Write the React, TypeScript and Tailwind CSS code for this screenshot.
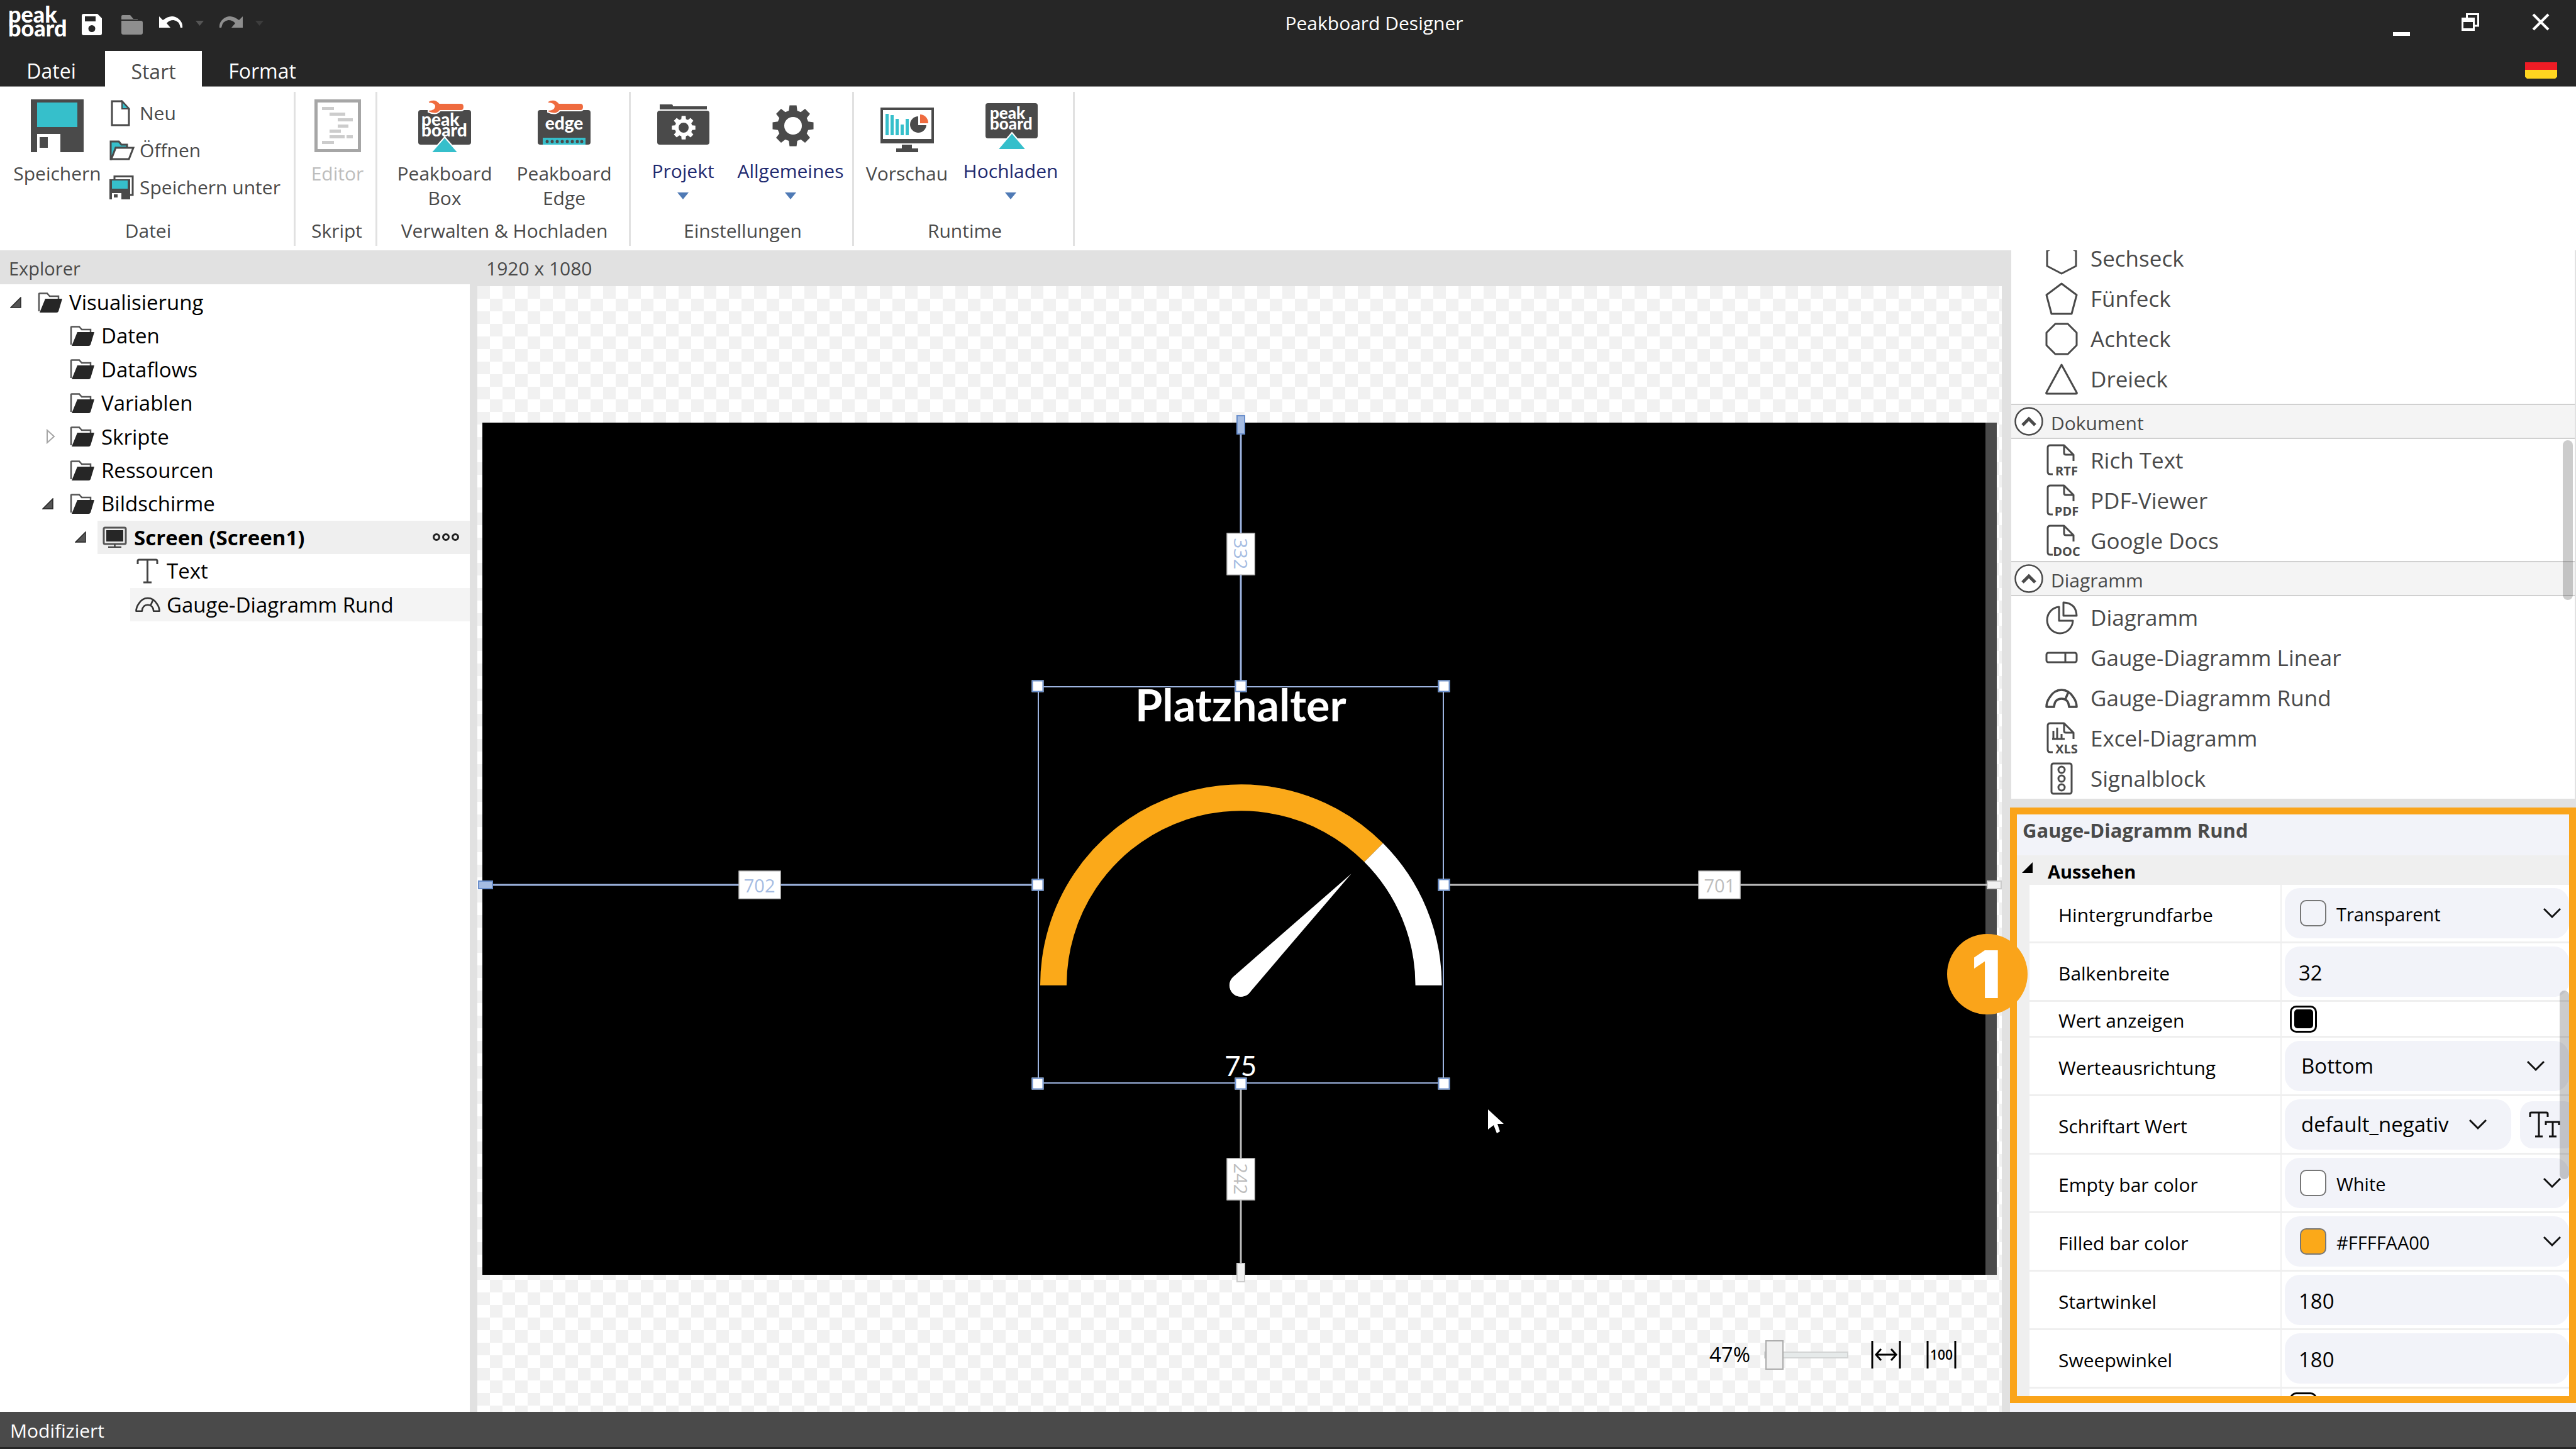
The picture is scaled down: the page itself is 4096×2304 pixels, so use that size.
import type { ReactNode } from "react";

const DARK = "#4a4a4a";
const CYAN = "#36bfcb";
const ORANGE = "#ef6b3f";

function gearPath(cx: number, cy: number, outer: number, root: number, hole: number) {
  const points: string[] = [];
  for (let i = 0; i < 8; i++) {
    const mid = (i * Math.PI) / 4;
    const corners: [number, number][] = [
      [root, -0.27],
      [outer, -0.17],
      [outer, 0.17],
      [root, 0.27],
    ];
    for (const [r, d] of corners) {
      points.push(`${(cx + r * Math.sin(mid + d)).toFixed(2)} ${(cy - r * Math.cos(mid + d)).toFixed(2)}`);
    }
  }
  return `M${points.join("L")}Z M${cx - hole} ${cy}a${hole} ${hole} 0 1 0 ${hole * 2} 0a${hole} ${hole} 0 1 0 ${-hole * 2} 0Z`;
}

/* ---------- ribbon icons ---------- */

function Big({ children }: { children: ReactNode }) {
  return (
    <svg viewBox="0 0 84 84" className="size-[84px] shrink-0 overflow-visible">
      {children}
    </svg>
  );
}

function LogoText({ x, y, size, gap }: { x: number; y: number; size: number; gap: number }) {
  return (
    <text fill="#fff" fontFamily="Lato, sans-serif" fontWeight={900} fontSize={size}>
      <tspan x={x} y={y}>peak</tspan>
      <tspan x={x} y={y + gap}>board</tspan>
    </text>
  );
}

const Wrench = () => (
  <path
    d="M16 3 Q27 -3 34 6 H68 Q73 6 73 12 Q73 18 68 18 H35 Q29 26 16 20 V17 Q26 17 26 11.500 Q26 6 16 6 Z"
    fill={ORANGE}
    stroke="#fff"
    strokeWidth="2"
  />
);

const SaveIcon = () => (
  <Big>
    <rect width="84" height="84" fill={DARK} />
    <rect x="10" y="5" width="64" height="39" fill={CYAN} />
    <rect x="10" y="55" width="37" height="29" fill="#fff" />
    <rect x="14" y="60" width="13" height="17" fill={DARK} />
  </Big>
);

const EditorIcon = () => (
  <Big>
    <g transform="translate(5 0)">
      <rect x="2.500" y="2.500" width="69" height="79" fill="#fff" stroke="#a6a6a6" strokeWidth="5" />
      <g fill="#cccccc">
        <rect x="12" y="12" width="19" height="5" />
        <rect x="24" y="21" width="25" height="5" />
        <rect x="37" y="30" width="24" height="5" />
        <rect x="37" y="40" width="17" height="5" />
        <rect x="24" y="48" width="18" height="5" />
        <rect x="24" y="57" width="24" height="5" />
        <rect x="51" y="57" width="10" height="5" />
        <rect x="12" y="66" width="19" height="5" />
      </g>
    </g>
  </Big>
);

const BoxIcon = () => (
  <Big>
    <rect y="17" width="84" height="55" rx="4" fill={DARK} />
    <LogoText x={5} y={42} size={28} gap={17} />
    <path d="M42 60 L64 85 H20 Z" fill={CYAN} stroke="#fff" strokeWidth="2" />
    <Wrench />
  </Big>
);

const EdgeIcon = () => (
  <Big>
    <rect y="17" width="84" height="55" rx="4" fill={DARK} />
    <text x="42" y="48" textAnchor="middle" fill="#fff" fontFamily="Lato, sans-serif" fontWeight={900} fontSize="28">
      edge
    </text>
    <rect x="8" y="61" width="68" height="11" fill={CYAN} />
    {[15, 23, 31, 39, 47, 55, 63, 70].map((x) => (
      <circle key={x} cx={x} cy="67" r="2.500" fill={DARK} />
    ))}
    <Wrench />
  </Big>
);

const ProjectIcon = () => (
  <Big>
    <path d="M5 8 H24 Q26 8 26 11 H80 V16 H5 Z" fill={DARK} />
    <rect x="1" y="18" width="83" height="54" rx="4" fill={DARK} />
    <path d={gearPath(43, 45, 19, 14, 8)} fill="#fff" fillRule="evenodd" />
  </Big>
);

const GearIcon = () => (
  <Big>
    <path d={gearPath(46, 42, 33, 25, 14)} fill={DARK} fillRule="evenodd" />
  </Big>
);

const PreviewIcon = () => (
  <Big>
    <rect y="13" width="85" height="57" fill={DARK} />
    <rect x="4" y="17" width="77" height="46" fill="#fff" />
    <rect x="34" y="72" width="16" height="7" fill={DARK} />
    <rect x="25" y="78" width="35" height="6" fill={DARK} />
    <g fill={CYAN}>
      <rect x="8" y="23" width="5" height="34" />
      <rect x="16" y="25" width="5" height="32" />
      <rect x="24" y="31" width="5" height="26" />
      <rect x="32" y="40" width="5" height="17" />
      <rect x="40" y="31" width="5" height="26" />
    </g>
    <path d="M60 27 A13 13 0 1 0 73 41 H60 Z" fill={DARK} />
    <path d="M63 24 A13 14 0 0 1 76 38 H63 Z" fill={ORANGE} />
  </Big>
);

const UploadIcon = () => (
  <Big>
    <rect x="2" y="6" width="83" height="56" rx="4" fill={DARK} />
    <LogoText x={9} y={31} size={26} gap={17} />
    <path d="M44 53 L67 80 H21 Z" fill={CYAN} stroke="#fff" strokeWidth="2" />
  </Big>
);

const NewIcon = () => (
  <svg viewBox="0 0 40 42" className="h-[42px] w-10 shrink-0">
    <path d="M4 2 H20 L31 14 V40 H4 Z" fill="#fff" stroke={DARK} strokeWidth="3" />
    <path d="M20 2 L31 14 H20 Z" fill={CYAN} stroke={DARK} strokeWidth="2" />
  </svg>
);

const OpenIcon = () => (
  <svg viewBox="0 0 40 32" className="h-8 w-10 shrink-0">
    <path d="M2 30 V2 H15 L19 7 H28 V12 H10 L3 30 Z" fill={CYAN} stroke={DARK} strokeWidth="3" />
    <path d="M10 12 H38 L31 30 H3 Z" fill="#fff" stroke={DARK} strokeWidth="3" />
  </svg>
);

const SaveAsIcon = () => (
  <svg viewBox="0 0 40 38" className="h-[38px] w-10 shrink-0">
    <path d="M8 6 V1.500 H37 V31 H33" fill="#fff" stroke={DARK} strokeWidth="3" />
    <rect x="0" y="6" width="33" height="32" fill={DARK} />
    <rect x="4" y="8" width="25" height="13" fill={CYAN} />
    <rect x="4" y="28" width="15" height="10" fill="#fff" />
    <rect x="7" y="30" width="6" height="5" fill={DARK} />
  </svg>
);

const DownTriangle = ({ className }: { className: string }) => (
  <svg viewBox="0 0 18 11" className={className}>
    <path d="M0 0 H18 L9 11 Z" fill="currentColor" />
  </svg>
);

/* ---------- ribbon ---------- */

function BigButton({ icon, lines, width, disabled }: { icon: ReactNode; lines: string[]; width: string; disabled?: boolean }) {
  return (
    <button type="button" disabled={disabled} className={`flex flex-col items-center pt-3 ${width} ${disabled ? "text-[#bdbdbd]" : ""}`}>
      {icon}
      <span className="mt-3.5 flex flex-col text-[30px] leading-[39px]">
        {lines.map((l) => (
          <span key={l}>{l}</span>
        ))}
      </span>
    </button>
  );
}

function MenuButton({ icon, label, width }: { icon: ReactNode; label: string; width: string }) {
  return (
    <button type="button" className={`flex flex-col items-center pt-3 text-[#1f2a70] ${width}`}>
      {icon}
      <span className="mt-2.5 text-[30px] leading-[39px]">{label}</span>
      <DownTriangle className="mt-[15px] h-[11px] w-[18px] text-[#4f7ab5]" />
    </button>
  );
}

function Group({ label, width, children }: { label: string; width: string; children: ReactNode }) {
  return (
    <section className={`flex flex-col border-r-[3px] border-[#e1e1e1] ${width}`}>
      <div className="flex flex-1 items-start">{children}</div>
      <h2 className="pl-1 text-center text-[30px] leading-[48px]">{label}</h2>
    </section>
  );
}

function Ribbon() {
  const small = [
    { icon: <NewIcon />, label: "Neu" },
    { icon: <OpenIcon />, label: "Öffnen" },
    { icon: <SaveAsIcon />, label: "Speichern unter" },
  ];
  return (
    <div className="flex h-[260px] shrink-0 bg-white pt-2 pb-[7px] text-[#4a4a4a]">
      <Group label="Datei" width="w-[470px]">
        <BigButton icon={<SaveIcon />} lines={["Speichern"]} width="ml-3 w-[158px]" />
        <ul className="mt-1 ml-1">
          {small.map((s) => (
            <li key={s.label}>
              <button type="button" className="flex h-[59px] items-center gap-2 text-[30px] whitespace-nowrap">
                {s.icon}
                {s.label}
              </button>
            </li>
          ))}
        </ul>
      </Group>
      <Group label="Skript" width="w-[130px]">
        <BigButton icon={<EditorIcon />} lines={["Editor"]} width="ml-1.5 w-[121px]" disabled />
      </Group>
      <Group label="Verwalten & Hochladen" width="w-[403px]">
        <BigButton icon={<BoxIcon />} lines={["Peakboard", "Box"]} width="ml-3 w-[190px]" />
        <BigButton icon={<EdgeIcon />} lines={["Peakboard", "Edge"]} width="w-[190px]" />
      </Group>
      <Group label="Einstellungen" width="w-[355px]">
        <MenuButton icon={<ProjectIcon />} label="Projekt" width="ml-0.5 w-[162px]" />
        <MenuButton icon={<GearIcon />} label="Allgemeines" width="w-[180px]" />
      </Group>
      <Group label="Runtime" width="w-[351px]">
        <BigButton icon={<PreviewIcon />} lines={["Vorschau"]} width="ml-0.5 w-[164px]" />
        <MenuButton icon={<UploadIcon />} label="Hochladen" width="w-[166px]" />
      </Group>
    </div>
  );
}

/* ---------- title bar ---------- */

function TitleBar() {
  return (
    <header className="shrink-0 bg-[#262626] text-white">
      <div className="flex h-[81px] items-start">
        <div className="flex w-[607px] items-start">
          <svg viewBox="0 0 104 70" className="ml-3 h-[70px] w-[104px] shrink-0" role="img" aria-label="peakboard">
            <LogoText x={1} y={36} size={36} gap={22} />
          </svg>
          <div className="flex h-[78px] items-center">
            <button type="button" aria-label="Speichern" className="ml-3.5">
              <svg viewBox="0 0 32 34" className="h-[34px] w-8">
                <path fillRule="evenodd" fill="#fff" d="M3 0 H25 L32 7 V31 Q32 34 29 34 H3 Q0 34 0 31 V3 Q0 0 3 0 Z M5 4 V12 H22 V4 Z M16 18 A5 5 0 1 0 16 29 A5 5 0 1 0 16 18 Z" />
              </svg>
            </button>
            <button type="button" aria-label="Öffnen" className="ml-[31px]">
              <svg viewBox="0 0 34 32" className="h-8 w-[34px]">
                <path fill="#8e8e8e" d="M0 8 V3 Q0 1 2 1 H14 L19 7 H26 V8 Z M0 10 H31 Q34 10 34 13 V29 Q34 32 31 32 H3 Q0 32 0 29 Z" />
              </svg>
            </button>
            <button type="button" aria-label="Rückgängig" className="-mt-2 ml-[26px]">
              <svg viewBox="0 0 38 20" className="h-5 w-[38px]">
                <path fill="#fff" d="M0 1 L6 7 Q20 -4 31 5 Q38 11 37 19 H34 Q32 8 23 7 Q16 7 12 12 L18 19 H0 Z" />
              </svg>
            </button>
            <DownTriangle className="-mt-1 ml-5 h-2.5 w-[13px] text-[#555555]" />
            <button type="button" aria-label="Wiederholen" className="-mt-2 ml-6">
              <svg viewBox="0 0 38 20" className="h-5 w-[38px]">
                <path fill="#8e8e8e" d="M38 1 L32 7 Q18 -4 7 5 Q0 11 1 19 H4 Q6 8 15 7 Q22 7 26 12 L20 19 H38 Z" />
              </svg>
            </button>
            <DownTriangle className="-mt-1 ml-5 h-2.5 w-[13px] text-[#3c3c3c]" />
          </div>
        </div>
        <h1 className="flex-1 text-center text-[30px] leading-[74px]">Peakboard Designer</h1>
        <button type="button" aria-label="Minimieren" className="flex h-[74px] w-[110px] justify-center pt-[51px]">
          <span className="h-1.5 w-[27px] bg-white" />
        </button>
        <button type="button" aria-label="Verkleinern" className="flex h-[74px] w-[110px] items-center justify-center">
          <svg viewBox="0 0 28 28" className="-mt-1 size-7">
            <path d="M8.500 7 V1.500 H26.500 V20 H20" fill="none" stroke="#fff" strokeWidth="3" />
            <path fillRule="evenodd" fill="#fff" d="M0 7 H21 V28 H0 Z M3 14 V24 H18 V14 Z" />
          </svg>
        </button>
        <button type="button" aria-label="Schließen" className="flex h-[74px] w-[113px] items-center justify-center">
          <svg viewBox="0 0 28 28" className="-mt-1 size-7">
            <path d="M2 2 L26 26 M26 2 L2 26" stroke="#fff" strokeWidth="4" />
          </svg>
        </button>
      </div>
      <nav className="flex h-[57px] text-[32px]">
        <button type="button" className="w-[167px] border-b border-[#888888] pt-2 pr-1">Datei</button>
        <button type="button" className="w-[154px] bg-white pt-2 text-[#4a4a4a]">Start</button>
        <button type="button" className="w-[196px] border-b border-[#888888] pt-2 pr-1">Format</button>
        <div className="flex flex-1 items-start justify-end border-b border-[#888888] pt-[18px] pr-[30px]">
          <button type="button" aria-label="Sprache: Deutsch">
            <svg viewBox="0 0 51 26" className="h-[26px] w-[51px]">
              <rect width="51" height="12" fill="#ee1c25" />
              <path d="M0 12 H51 V23 L48 26 H3 L0 23 Z" fill="#ffd520" />
            </svg>
          </button>
        </div>
      </nav>
    </header>
  );
}

/* ---------- explorer ---------- */

const FolderIcon = () => (
  <svg viewBox="0 0 40 32" className="h-8 w-10 shrink-0">
    <path d="M2 30 V2 Q2 1.500 3 1.500 H15 L19 6 H33 V10" fill="none" stroke="#555555" strokeWidth="2.500" />
    <path d="M12 10 H39 L33 30 Q32 32 30 32 H3 Z" fill="#262626" />
  </svg>
);

const ScreenIcon = () => (
  <svg viewBox="0 0 40 34" className="h-[34px] w-10 shrink-0">
    <rect x="2" y="2" width="35" height="26" rx="2" fill="none" stroke="#555555" strokeWidth="3" />
    <rect x="6" y="6" width="27" height="18" fill="#262626" />
    <path d="M19.500 28 V33 M9 33 H30" stroke="#444444" strokeWidth="2.500" />
  </svg>
);

const TextIcon = () => (
  <svg viewBox="0 0 40 40" className="size-10 shrink-0">
    <path d="M4 9 V4 Q4 2 6 2 H33 Q35 2 35 4 V9 M19.500 2 V38 M13 38 H26" fill="none" stroke="#444444" strokeWidth="3" />
  </svg>
);

function RoundGauge({ className, color }: { className: string; color: string }) {
  return (
    <svg viewBox="0 0 52 52" className={className}>
      <path
        d="M2 40 Q2 32 7 25 Q14 13 26 13 Q38 13 45 25 Q50 32 50 40 H38 Q37 27 26 27 Q15 27 14 40 Z M32 28 L37 16"
        fill="none"
        stroke={color}
        strokeWidth="3.500"
        strokeLinejoin="round"
      />
    </svg>
  );
}

type Node = { label: string; level: 0 | 1 | 2 | 3; arrow?: "open" | "closed"; icon: ReactNode; bold?: boolean; mark?: string };

const tree: Node[] = [
  { label: "Visualisierung", level: 0, arrow: "open", icon: <FolderIcon /> },
  { label: "Daten", level: 1, icon: <FolderIcon /> },
  { label: "Dataflows", level: 1, icon: <FolderIcon /> },
  { label: "Variablen", level: 1, icon: <FolderIcon /> },
  { label: "Skripte", level: 1, arrow: "closed", icon: <FolderIcon /> },
  { label: "Ressourcen", level: 1, icon: <FolderIcon /> },
  { label: "Bildschirme", level: 1, arrow: "open", icon: <FolderIcon /> },
  { label: "Screen (Screen1)", level: 2, arrow: "open", icon: <ScreenIcon />, bold: true, mark: "bg-[#efefef]" },
  { label: "Text", level: 3, icon: <TextIcon /> },
  { label: "Gauge-Diagramm Rund", level: 3, icon: <RoundGauge className="size-10 shrink-0" color="#333333" />, mark: "bg-[#f4f4f4]" },
];

const indent = ["pl-4", "pl-[67px]", "pl-[119px]", "pl-[171px]"];

function Explorer() {
  return (
    <aside className="flex w-[747px] shrink-0 flex-col">
      <h2 className="h-[54px] pl-3.5 text-[29px] leading-[58px] text-[#4a4a4a]">Explorer</h2>
      <div className="flex-1 bg-white pt-0.5">
        <ul className="grid h-[534px] grid-rows-10 text-[33px] text-black">
          {tree.map((n) => (
            <li key={n.label} className={`flex min-h-0 ${indent[n.level]}`}>
              <span className="flex w-9 shrink-0 items-center">
                {n.arrow === "open" && (
                  <svg viewBox="0 0 18 18" className="size-[18px]">
                    <path d="M17 1 V17 H1 Z" fill="#555555" stroke="#262626" strokeWidth="1.500" />
                  </svg>
                )}
                {n.arrow === "closed" && (
                  <svg viewBox="0 0 22 24" className="h-6 w-[22px]">
                    <path d="M8 2 V22 L19 12 Z" fill="#fff" stroke="#a6a6a6" strokeWidth="2" />
                  </svg>
                )}
              </span>
              <button type="button" className={`flex flex-1 items-center gap-2.5 pl-2 text-left ${n.mark ?? ""} ${n.bold ? "font-bold" : ""}`}>
                {n.icon}
                <span className="flex-1">{n.label}</span>
                {n.bold && (
                  <svg viewBox="0 0 44 16" className="mr-4 h-4 w-11">
                    <g fill="none" stroke="#222222" strokeWidth="3">
                      <circle cx="7" cy="8" r="4.500" />
                      <circle cx="22" cy="8" r="4.500" />
                      <circle cx="37" cy="8" r="4.500" />
                    </g>
                  </svg>
                )}
              </button>
            </li>
          ))}
        </ul>
      </div>
    </aside>
  );
}

/* ---------- canvas ---------- */

const handleSpots = [
  "left-0 top-0",
  "left-1/2 top-0",
  "left-full top-0",
  "left-0 top-1/2",
  "left-full top-1/2",
  "left-0 top-full",
  "left-1/2 top-full",
  "left-full top-full",
];

function Stage() {
  const tag = "absolute flex -translate-x-1/2 -translate-y-1/2 items-center justify-center border border-[#a6a6a6] bg-white text-[29px] leading-none";
  return (
    <div className="relative aspect-video w-full border-r-[18px] border-[#4a4a4a] bg-black">
      <div className="absolute top-0 -right-[18px] bottom-0 left-0">
        {/* anchor lines */}
        <div className="absolute top-0 left-[50.100%] h-[31%] w-[3px] -translate-x-1/2 bg-[#9db4e0]" />
        <div className="absolute bottom-0 left-[50.100%] h-[22.500%] w-[3px] -translate-x-1/2 bg-[#bdbdbd]" />
        <div className="absolute top-[54.300%] left-0 h-[3px] w-[36.600%] -translate-y-1/2 bg-[#9db4e0]" />
        <div className="absolute top-[54.300%] right-0 h-[3px] w-[36.500%] -translate-y-1/2 bg-[#bdbdbd]" />
        <div className="absolute top-0 left-[50.100%] h-[31px] w-3.5 -translate-x-1/2 -translate-y-3 border-2 border-[#6a8fcc] bg-[#a5bce2]" />
        <div className="absolute bottom-0 left-[50.100%] h-[31px] w-3.5 -translate-x-1/2 translate-y-3 border-2 border-[#cccccc] bg-[#f1f1f1]" />
        <div className="absolute top-[54.300%] left-0 h-3.5 w-6 -translate-x-[7px] -translate-y-1/2 border-2 border-[#6a8fcc] bg-[#a5bce2]" />
        <div className="absolute top-[54.300%] right-0 h-3.5 w-6 translate-x-2 -translate-y-1/2 border-2 border-[#cccccc] bg-[#f1f1f1]" />
        <div className={`${tag} top-[15.400%] left-[50.100%] h-[67px] w-[45px] text-[#a5bce2] [writing-mode:vertical-rl]`}>332</div>
        <div className={`${tag} top-[88.800%] left-[50.100%] h-[67px] w-[45px] text-[#bdbdbd] [writing-mode:vertical-rl]`}>242</div>
        <div className={`${tag} top-[54.300%] left-[18.300%] h-[45px] w-[67px] text-[#a5bce2]`}>702</div>
        <div className={`${tag} top-[54.300%] left-[81.700%] h-[45px] w-[67px] text-[#bdbdbd]`}>701</div>

        {/* selected gauge */}
        <div className="absolute top-[30.900%] left-[36.650%] h-[46.700%] w-[26.850%]">
          <div className="absolute inset-0 flex flex-col items-center justify-between font-['Lato',sans-serif] text-white">
            <span className="text-[70px] leading-[58px] font-bold">Platzhalter</span>
            <span className="text-[44px] leading-[58px]">75</span>
          </div>
          <svg viewBox="0 0 647 632" className="absolute inset-0 size-full">
            <path d="M25 475.500 A298.500 298.500 0 0 1 534.600 264.400" fill="none" stroke="#fba919" strokeWidth="42" />
            <path d="M534.600 264.400 A298.500 298.500 0 0 1 622 475.500" fill="none" stroke="#fff" strokeWidth="42" />
            <path d="M499 298 L336 488.500 A18 18 0 0 1 310.500 462.500 Z" fill="#fff" />
            <circle cx="323.500" cy="475.500" r="18" fill="#fff" />
          </svg>
          <div className="absolute inset-0 border-2 border-[#9db4e0]" />
          {handleSpots.map((s) => (
            <div key={s} className={`absolute size-[19px] -translate-x-1/2 -translate-y-1/2 border-2 border-[#6a8fcc] bg-white ${s}`} />
          ))}
        </div>

        {/* mouse pointer */}
        <svg viewBox="0 0 25 38" className="absolute top-[80.600%] left-[66.400%] h-[38px] w-[25px]">
          <path d="M0 0 L25 23 H15 L19 35 L14 38 L9 25 L0 32 Z" fill="#fff" />
        </svg>
      </div>
    </div>
  );
}

function CanvasArea() {
  return (
    <main className="ml-3 flex min-w-0 flex-1 flex-col">
      <h2 className="h-[57px] shrink-0 pl-3.5 text-[30px] leading-[58px] text-[#4a4a4a]">1920 x 1080</h2>
      <div className="flex-1 bg-[repeating-conic-gradient(#fff_0_25%,#f1f1f1_0_50%)] bg-size-[40px_40px] px-2 pt-[217px]">
        <Stage />
        <div className="mt-[104px] flex h-[47px] items-center justify-end pr-16 text-[33px] text-black">
          <label htmlFor="zoom">47%</label>
          <input
            id="zoom"
            type="range"
            defaultValue={0}
            className="ml-[22px] h-[47px] w-[134px] appearance-none bg-transparent [&::-webkit-slider-runnable-track]:h-[11px] [&::-webkit-slider-runnable-track]:border-2 [&::-webkit-slider-runnable-track]:border-[#d3d5d5] [&::-webkit-slider-runnable-track]:bg-[#e6eaea] [&::-webkit-slider-thumb]:-mt-5 [&::-webkit-slider-thumb]:h-[47px] [&::-webkit-slider-thumb]:w-[29px] [&::-webkit-slider-thumb]:appearance-none [&::-webkit-slider-thumb]:border-2 [&::-webkit-slider-thumb]:border-[#acacac] [&::-webkit-slider-thumb]:bg-[#f0f0f0]"
          />
          <button type="button" aria-label="Einpassen" className="ml-9">
            <svg viewBox="0 0 48 46" className="h-[46px] w-12">
              <path d="M2 1 V45 M46 1 V45 M8 23 H40 M16 14 L8 23 L16 32 M32 14 L40 23 L32 32" fill="none" stroke="#000" strokeWidth="3" />
            </svg>
          </button>
          <button type="button" aria-label="100 Prozent" className="ml-10">
            <svg viewBox="0 0 48 46" className="h-[46px] w-12">
              <path d="M2 1 V45 M46 1 V45" stroke="#000" strokeWidth="3" />
              <text x="24" y="31" textAnchor="middle" fontFamily="'Open Sans', sans-serif" fontWeight="600" fontSize="21">
                100
              </text>
            </svg>
          </button>
        </div>
      </div>
    </main>
  );
}

/* ---------- toolbox ---------- */

function Tool({ children }: { children: ReactNode }) {
  return (
    <svg viewBox="0 0 52 52" className="size-[52px] shrink-0 overflow-visible" fill="none" stroke={DARK} strokeWidth="3" strokeLinejoin="round">
      {children}
    </svg>
  );
}

function DocTool({ name, children }: { name: string; children?: ReactNode }) {
  return (
    <Tool>
      <path d="M12 48 H8 Q4 48 4 44 V6 Q4 2 8 2 H30 L45 17 V27 M30 2 V14 Q30 17 33 17 H45" />
      {children}
      <text x="34" y="50" textAnchor="middle" stroke="none" fill={DARK} fontFamily="'Open Sans', sans-serif" fontWeight="700" fontSize="20">
        {name}
      </text>
    </Tool>
  );
}

const shapes = [
  { label: "Sechseck", icon: <Tool><path d="M26 2 L49 14 V38 L26 50 L3 38 V14 Z" /></Tool> },
  { label: "Fünfeck", icon: <Tool><path d="M26 2 L50 20 L42 50 H10 L2 20 Z" /></Tool> },
  { label: "Achteck", icon: <Tool><path d="M16 2 H36 L50 16 V36 L36 50 H16 L2 36 V16 Z" /></Tool> },
  { label: "Dreieck", icon: <Tool><path d="M26 3 L50 47 Q51 49 49 49 H3 Q1 49 2 47 Z" /></Tool> },
];

const documents = [
  { label: "Rich Text", icon: <DocTool name="RTF" /> },
  { label: "PDF-Viewer", icon: <DocTool name="PDF" /> },
  { label: "Google Docs", icon: <DocTool name="DOC" /> },
];

const charts = [
  {
    label: "Diagramm",
    icon: (
      <Tool>
        <path d="M22 9 A20.500 21 0 1 0 44 31 H22 Z" />
        <path d="M29 2 V23 H50 Q49 3 29 2 Z" />
      </Tool>
    ),
  },
  {
    label: "Gauge-Diagramm Linear",
    icon: (
      <Tool>
        <rect x="2" y="18" width="48" height="15" rx="3" />
        <path d="M32 18 V33" />
      </Tool>
    ),
  },
  { label: "Gauge-Diagramm Rund", icon: <RoundGauge className="size-[52px] shrink-0" color={DARK} /> },
  {
    label: "Excel-Diagramm",
    icon: (
      <DocTool name="XLS">
        <path d="M11 27 H31 M13 27 V14 M19 27 V9 M26 27 V19" />
      </DocTool>
    ),
  },
  {
    label: "Signalblock",
    icon: (
      <Tool>
        <rect x="10" y="2" width="32" height="48" rx="3" />
        <circle cx="26" cy="12" r="5" />
        <circle cx="26" cy="26" r="5" />
        <circle cx="26" cy="40" r="5" />
      </Tool>
    ),
  },
];

function ToolList({ items }: { items: { label: string; icon: ReactNode }[] }) {
  return (
    <ul>
      {items.map((t) => (
        <li key={t.label}>
          <button type="button" className="flex h-16 w-full items-center gap-5 pl-[54px] text-[35px]">
            {t.icon}
            {t.label}
          </button>
        </li>
      ))}
    </ul>
  );
}

function ToolHeader({ label }: { label: string }) {
  return (
    <button type="button" className="flex h-14 w-full items-center gap-3 border-y-2 border-[#d0d0d0] bg-[#f4f4f4] pl-[5px] text-[30px]">
      <svg viewBox="0 0 46 46" className="size-[46px]">
        <circle cx="23" cy="23" r="21.500" fill="#fff" stroke={DARK} strokeWidth="2.500" />
        <path d="M13 29 L23 19 L33 29" fill="none" stroke={DARK} strokeWidth="5" />
      </svg>
      <span className="pt-1">{label}</span>
    </button>
  );
}

function Toolbox() {
  return (
    <section className="relative mr-0.5 ml-0.5 h-[872px] shrink-0 overflow-hidden bg-white text-[#4a4a4a]">
      <div className="-mt-[19px] pb-[7px]">
        <ToolList items={shapes} />
      </div>
      <ToolHeader label="Dokument" />
      <div className="pt-0.5">
        <ToolList items={documents} />
      </div>
      <ToolHeader label="Diagramm" />
      <div className="pt-0.5">
        <ToolList items={charts} />
      </div>
      <div className="absolute top-[302px] right-[3px] h-[254px] w-4 rounded-full bg-black/20" />
    </section>
  );
}

/* ---------- properties ---------- */

const Chevron = ({ className }: { className: string }) => (
  <svg viewBox="0 0 28 18" className={`pointer-events-none absolute top-1/2 h-[18px] w-7 -translate-y-1/2 ${className}`}>
    <path d="M1 2 L14 15 L27 2" fill="none" stroke="#111111" strokeWidth="3" />
  </svg>
);

function Row({ label, id, short, children }: { label: string; id: string; short?: boolean; children: ReactNode }) {
  return (
    <div className={`flex shrink-0 border-b-[3px] border-[#efefef] bg-white ${short ? "h-[57px]" : "h-[93px]"}`}>
      <label htmlFor={id} className="flex w-[401px] items-center border-r-2 border-[#efefef] pt-1 pl-[46px] text-[30px]">
        {label}
      </label>
      <div className="flex min-w-0 flex-1 items-center pl-[5px]">{children}</div>
    </div>
  );
}

function ColorField({ id, value, swatch }: { id: string; value: string; swatch: string }) {
  return (
    <div className="relative flex h-20 flex-1 items-center rounded-[24px] bg-[#f2f3f9] pl-6">
      <span className={`size-[42px] rounded-[10px] border-2 border-[#777777] ${swatch}`} />
      <select id={id} className="ml-4 flex-1 appearance-none bg-transparent pt-1 text-[29px]">
        <option>{value}</option>
      </select>
      <Chevron className="right-[13px]" />
    </div>
  );
}

function NumberField({ id, value }: { id: string; value: string }) {
  return <input id={id} defaultValue={value} className="h-20 w-full rounded-[24px] bg-[#f2f3f9] pt-0.5 pl-[22px] text-[33px]" />;
}

function Properties() {
  return (
    <div className="mt-3.5 flex min-h-0 flex-1 flex-col bg-[#f2f3f9] pb-3.5">
      <section className="relative flex min-h-0 flex-1 flex-col border-[11px] border-[#faa41a]">
        <div className="relative flex min-h-0 flex-1 flex-col overflow-hidden bg-[#efefef] text-black">
          <h2 className="h-[65px] shrink-0 bg-[#f2f3f9] pl-[9px] text-[31px] leading-[50px] font-bold text-[#4a4a4a]">Gauge-Diagramm Rund</h2>
          <button type="button" className="flex h-[47px] shrink-0 items-center gap-6 pl-2 text-[29px] font-bold">
            <svg viewBox="0 0 17 17" className="-mt-2 size-[17px]">
              <path d="M17 0 V17 H0 Z" fill="#000" />
            </svg>
            <span className="pt-1">Aussehen</span>
          </button>
          <div className="ml-5 flex flex-col">
            <Row label="Hintergrundfarbe" id="bg">
              <ColorField id="bg" value="Transparent" swatch="bg-transparent" />
            </Row>
            <Row label="Balkenbreite" id="width">
              <NumberField id="width" value="32" />
            </Row>
            <Row label="Wert anzeigen" id="show" short>
              <input
                id="show"
                type="checkbox"
                defaultChecked
                className="ml-2 grid size-[43px] appearance-none place-items-center rounded-[10px] border-[3px] border-black checked:before:size-[30px] checked:before:rounded-[5px] checked:before:bg-black"
              />
            </Row>
            <Row label="Werteausrichtung" id="align">
              <div className="relative flex h-20 flex-1 items-center rounded-[24px] bg-[#f2f3f9]">
                <select id="align" className="flex-1 appearance-none bg-transparent pl-[26px] text-[33px]">
                  <option>Bottom</option>
                </select>
                <Chevron className="right-[39px]" />
              </div>
            </Row>
            <Row label="Schriftart Wert" id="font">
              <div className="relative flex h-20 w-[360px] shrink-0 items-center rounded-[24px] bg-[#f2f3f9]">
                <select id="font" className="flex-1 appearance-none bg-transparent pl-[26px] text-[33px]">
                  <option>default_negativ</option>
                </select>
                <Chevron className="right-[39px]" />
              </div>
              <button type="button" aria-label="Schriftart bearbeiten" className="ml-3.5 flex h-[75px] w-[90px] shrink-0 items-center rounded-[20px] bg-[#f2f3f9] pl-3.5">
                <svg viewBox="0 0 50 42" className="h-[42px] w-[50px]">
                  <path d="M2 9 V3 Q2 2 4 2 H28 Q30 2 30 4 V9 M16 2 V40 M10 40 H22 M27 22 V17 H48 V22 M38 17 V40 M32 40 H44" fill="none" stroke="#111111" strokeWidth="3" />
                </svg>
              </button>
            </Row>
            <Row label="Empty bar color" id="empty">
              <ColorField id="empty" value="White" swatch="bg-white" />
            </Row>
            <Row label="Filled bar color" id="filled">
              <ColorField id="filled" value="#FFFFAA00" swatch="bg-[#fba919]" />
            </Row>
            <Row label="Startwinkel" id="start">
              <NumberField id="start" value="180" />
            </Row>
            <Row label="Sweepwinkel" id="sweep">
              <NumberField id="sweep" value="180" />
            </Row>
            <Row label="" id="more" short>
              <input id="more" type="checkbox" aria-label="Weitere Option" className="ml-2 size-[43px] appearance-none rounded-[10px] border-[3px] border-black" />
            </Row>
          </div>
          <div className="absolute top-[280px] right-0 h-[300px] w-[15px] rounded-full bg-black/20" />
        </div>
        <div className="absolute top-[190px] -left-[111px] flex size-32 items-center justify-center rounded-full bg-[#faa41a] pr-1 font-['Inter',sans-serif] text-[104px] leading-none font-black text-white">
          1
        </div>
      </section>
    </div>
  );
}

export default function App() {
  return (
    <div className="flex h-screen flex-col overflow-hidden bg-[#e1e1e1] font-['Open_Sans','Noto_Sans',sans-serif]">
      <TitleBar />
      <Ribbon />
      <div className="flex min-h-0 flex-1">
        <Explorer />
        <CanvasArea />
        <aside className="ml-[13px] flex w-[900px] shrink-0 flex-col">
          <Toolbox />
          <Properties />
        </aside>
      </div>
      <footer className="h-[59px] shrink-0 border-b-[3px] border-[#262626] bg-[#4a4a4a] pl-4 text-[30px] leading-[60px] text-white">Modifiziert</footer>
    </div>
  );
}
